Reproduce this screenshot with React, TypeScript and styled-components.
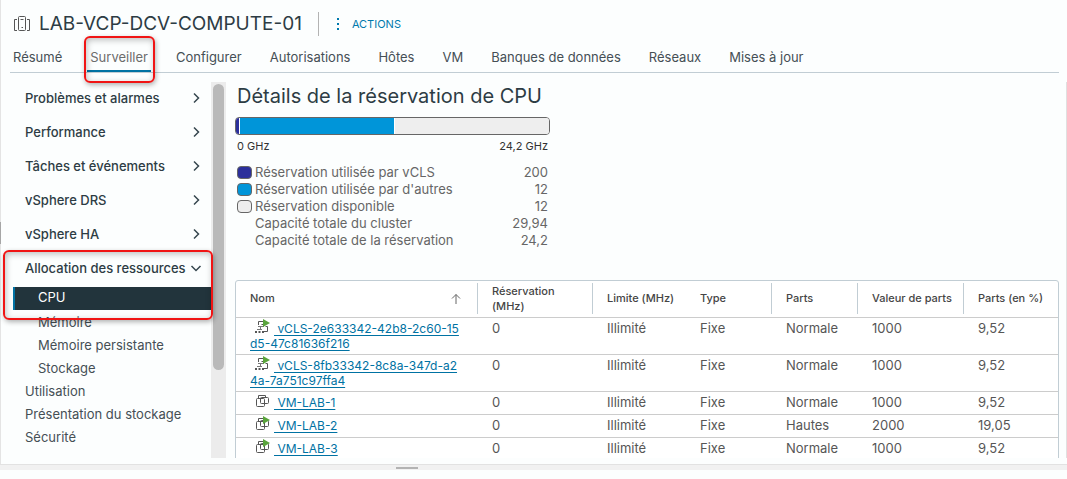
import React from "react";
import styled, { createGlobalStyle, css } from "styled-components";

const GlobalStyle = createGlobalStyle`
  *, *::before, *::after { box-sizing: border-box; }
  body {
    margin: 0;
    background: #fcfefe;
    color: #565656;
    font-family: Inter, "Liberation Sans", sans-serif;
    font-size: 13px;
    line-height: 16px;
  }
  button { font: inherit; color: inherit; background: none; border: 0; padding: 0; cursor: pointer; }
  a { color: inherit; text-decoration: none; }
  h1, h2, dl, dd, dt { margin: 0; padding: 0; font-weight: 400; }
`;

const Shell = styled.div`
  display: flex;
  flex-direction: column;
  height: 100vh;
  overflow: hidden;
`;

const Workspace = styled.main`
  position: relative;
  display: flex;
  flex: 1;
  flex-direction: column;
  min-height: 0;
  border-left: 1px solid #e4e4e4;
`;

const CollapseGrip = styled.span`
  position: absolute;
  left: -1px;
  top: 222px;
  width: 1px;
  height: 22px;
  background: #a6a6a6;
`;

const Header = styled.header`
  display: flex;
  align-items: center;
  height: 48px;
  padding-left: 12px;
`;

const Title = styled.h1`
  margin-left: 8px;
  padding-right: 16px;
  border-right: 1px solid #b3b3b3;
  color: #2d3c44;
  font-size: 19px;
  line-height: 24px;
  white-space: nowrap;
`;

const ActionsButton = styled.button`
  display: flex;
  align-items: center;
  gap: 12px;
  margin-left: 17px;
  color: #0079ad;
  font-size: 11px;
`;

const TabBar = styled.nav`
  display: flex;
  gap: 22px;
  margin: 0 8px 0 9px;
  border-bottom: 1px solid #c1cdd4;
`;

const Tab = styled.a<{ $active?: boolean }>`
  position: relative;
  height: 24px;
  padding: 0 3px;
  color: #454f55;
  line-height: 18px;
  white-space: nowrap;
  ${(p) => p.$active && css`
    color: #6c6c6c;
    box-shadow: inset 0 -2px 0 #0072a3;
  `}
`;

const Highlight = styled.span<{ $inset: string }>`
  position: absolute;
  inset: ${(p) => p.$inset};
  z-index: 2;
  border: 2px solid #f01414;
  border-radius: 6px;
  box-shadow: 1px 2px 5px rgba(0, 0, 0, 0.3), inset 1px 2px 6px rgba(0, 0, 0, 0.25);
  pointer-events: none;
`;

const Body = styled.div`
  display: flex;
  flex: 1;
  min-height: 0;
  padding: 9px 0 6px;
`;

const Sidebar = styled.nav`
  display: flex;
  flex-direction: column;
  flex: 0 0 210px;
`;

const GroupButton = styled.button`
  display: flex;
  align-items: center;
  justify-content: space-between;
  height: 34px;
  padding: 0 9px 2px 24px;
  color: #2d3c44;
  font-weight: 500;
  text-align: left;
  white-space: nowrap;
`;

const OpenGroup = styled.div`
  position: relative;
  display: flex;
  flex-direction: column;
`;

const NavLink = styled.a<{ $level: number; $active?: boolean }>`
  display: block;
  height: 23px;
  padding-left: ${(p) => (p.$level === 2 ? 37 : 24)}px;
  color: #454f55;
  line-height: 23px;
  ${(p) => p.$active && css`
    margin: 1px 0 1px 12px;
    padding-left: 23px;
    border-left: 2px solid #0072a3;
    background: #22343c;
    color: #fff;
    line-height: 21px;
  `}
`;

const ScrollTrack = styled.div`
  flex: 0 0 15px;
  padding: 2px;
  background: #ececec;
`;

const ScrollThumb = styled.div`
  height: 77%;
  border-radius: 6px;
  background: #b9b9b9;
`;

const Content = styled.section`
  flex: 1;
  min-width: 0;
  overflow: hidden;
  padding: 0 9px;
  border-right: 1px solid #e0e0e0;
`;

const SectionTitle = styled.h2`
  margin-left: 2px;
  color: #2d3c44;
  font-size: 20px;
  line-height: 28px;
  white-space: nowrap;
`;

const Summary = styled.div`
  width: 315px;
  margin: 7px 0 32px;
`;

const Meter = styled.div`
  display: flex;
  gap: 1px;
  height: 18px;
  overflow: hidden;
  border: 1px solid #666;
  border-radius: 4px;
  background: #fff;
`;

const Segment = styled.span<{ $color: string; $share: number }>`
  flex: ${(p) => p.$share} 0 0;
  background: ${(p) => p.$color};
`;

const Scale = styled.div`
  display: flex;
  justify-content: space-between;
  padding: 3px 2px 0;
  color: #333;
  font-size: 11px;
`;

const Legend = styled.dl`
  margin: 9px 2px 0;
`;

const LegendRow = styled.div`
  display: flex;
  align-items: center;
  height: 17px;
  color: #666;
  white-space: nowrap;
  dd { margin-left: auto; }
`;

const Swatch = styled.span<{ $color?: string }>`
  width: 15px;
  height: 13px;
  margin: 2px 3px 0 0;
  border: 1px solid ${(p) => (p.$color ? "#666" : "transparent")};
  border-radius: 4px;
  background: ${(p) => p.$color ?? "transparent"};
`;

const TableFrame = styled.div`
  margin-right: 1px;
`;

const Grid = styled.table`
  width: 100%;
  table-layout: fixed;
  border: 1px solid #c1cdd4;
  border-radius: 3px;
  border-spacing: 0;
  background: #fff;
`;

const HeadCell = styled.th<{ $divided?: boolean }>`
  height: 37px;
  padding: 0;
  border-bottom: 1px solid #ccc;
  color: #454545;
  font-size: 11px;
  font-weight: 500;
  line-height: 15px;
  text-align: left;
  > div {
    display: flex;
    align-items: center;
    justify-content: space-between;
    height: 31px;
    margin-bottom: 1px;
    padding: 0 16px 0 14px;
    border-right: 1px solid ${(p) => (p.$divided ? "#c1cdd4" : "transparent")};
    white-space: pre;
  }
`;

const Row = styled.tr`
  height: 23px;
`;

const Cell = styled.td`
  padding: 3px 0 3px 14px;
  border-bottom: 1px solid #ccc;
  line-height: 15px;
  vertical-align: top;
  white-space: nowrap;
`;

const NameCell = styled(Cell)`
  font-size: 12px;
`;

const VmLink = styled.a`
  color: #0072a3;
  text-decoration: underline;
  text-underline-offset: 2px;
  white-space: pre;
`;

const VmSvg = styled.svg`
  margin: -2px 3px 0 5px;
  vertical-align: top;
`;

const Splitter = styled.div`
  display: flex;
  justify-content: center;
  flex: 0 0 6px;
  margin-bottom: 9px;
  padding: 2px 254px 1px 0;
  border-top: 1px solid #e2e2e2;
  background: #f1f1f1;
  &::after {
    content: "";
    width: 22px;
    background: #b3b3b3;
  }
`;

const ClusterIcon = () => (
  <svg width="18" height="18" viewBox="0 0 18 18" fill="none" stroke="#565656" aria-hidden="true">
    <path d="M4 4.500H1.500v11H4M14 4.500h2.500v11H14" />
    <rect x="5.500" y="1.500" width="7" height="14" rx="1" />
    <path d="M7.500 4.500h3M8.500 12.500h1.500" />
  </svg>
);

const Dots = () => (
  <svg width="4" height="14" viewBox="0 0 4 14" fill="#0079ad" aria-hidden="true">
    <rect x="1" y="1" width="2" height="2" />
    <rect x="1" y="6" width="2" height="2" />
    <rect x="1" y="11" width="2" height="2" />
  </svg>
);

const Chevron = ({ open }: { open?: boolean }) => (
  <svg width="12" height="12" viewBox="0 0 12 12" fill="none" stroke="#36474f" strokeWidth="1.5" aria-hidden="true">
    <path d={open ? "M1.500 4 6 8.500 10.500 4" : "M4 1.500 8.500 6 4 10.500"} />
  </svg>
);

const SortArrow = () => (
  <svg width="10" height="12" viewBox="0 0 10 12" fill="none" stroke="#666" aria-label="Tri croissant">
    <path d="M5 11V1.500M1 5.500 5 1.500 9 5.500" />
  </svg>
);

const VmIcon = ({ agent, running }: { agent?: boolean; running?: boolean }) => (
  <VmSvg width="16" height="15" viewBox="0 0 16 15" fill="none" stroke="#565656" aria-hidden="true">
    {agent ? (
      <>
        <path d="M3.500 6V2.500H8M6.500 5.500H8M10.500 7.500h2v5h-5" />
        <path d="M3 7.500h6M5.500 8v2.500M2 10.500h5" stroke="#777" />
        <path d="M0 13h2M3.500 13h2M7 13h2" strokeWidth="2" />
      </>
    ) : (
      <>
        <path d="M3.500 5V2.500h7V4" />
        <rect x="1.500" y="5.500" width="8" height="8" rx="1" />
        <rect x="5.500" y="4.500" width="8" height="6" rx="1" />
      </>
    )}
    {running && <path d="M8 0 15 4 8 8z" fill="#5aa43c" stroke="none" />}
  </VmSvg>
);

const tabs = ["Résumé", "Surveiller", "Configurer", "Autorisations", "Hôtes", "VM", "Banques de données", "Réseaux", "Mises à jour"];
const groups = ["Problèmes et alarmes", "Performance", "Tâches et événements", "vSphere DRS", "vSphere HA"];

const legend = [
  { label: "Réservation utilisée par vCLS", value: "200", color: "#2b2f9b" },
  { label: "Réservation utilisée par d'autres", value: "12", color: "#0095d9" },
  { label: "Réservation disponible", value: "12", color: "#eee" },
  { label: "Capacité totale du cluster", value: "29,94" },
  { label: "Capacité totale de la réservation", value: "24,2" },
];

const columns = [
  { label: "Nom", width: 242, divided: true, sorted: true },
  { label: "Réservation\n(MHz)", width: 115, divided: true },
  { label: "Limite (MHz)", width: 93 },
  { label: "Type", width: 86, divided: true },
  { label: "Parts", width: 86, divided: true },
  { label: "Valeur de parts", width: 106, divided: true },
  { label: "Parts (en %)", width: 94 },
];

const vms = [
  { name: "vCLS-2e633342-42b8-2c60-15\nd5-47c81636f216", agent: true, running: true, parts: "Normale", value: "1000", percent: "9,52" },
  { name: "vCLS-8fb33342-8c8a-347d-a2\n4a-7a751c97ffa4", agent: true, running: true, parts: "Normale", value: "1000", percent: "9,52" },
  { name: "VM-LAB-1", parts: "Normale", value: "1000", percent: "9,52" },
  { name: "VM-LAB-2", running: true, parts: "Hautes", value: "2000", percent: "19,05" },
  { name: "VM-LAB-3", running: true, parts: "Normale", value: "1000", percent: "9,52" },
];

export default function App() {
  return (
    <Shell>
      <GlobalStyle />
      <Workspace>
        <CollapseGrip />
        <Header>
          <ClusterIcon />
          <Title>LAB-VCP-DCV-COMPUTE-01</Title>
          <ActionsButton>
            <Dots />
            ACTIONS
          </ActionsButton>
        </Header>
        <TabBar>
          {tabs.map((tab) => (
            <Tab key={tab} href="#" $active={tab === "Surveiller"}>
              {tab}
              {tab === "Surveiller" && <Highlight $inset="-12px -4px -11px -3px" />}
            </Tab>
          ))}
        </TabBar>
        <Body>
          <Sidebar>
            {groups.map((group) => (
              <GroupButton key={group}>
                {group}
                <Chevron />
              </GroupButton>
            ))}
            <OpenGroup>
              <GroupButton aria-expanded="true">
                Allocation des ressources
                <Chevron open />
              </GroupButton>
              <NavLink href="#" $level={2} $active>CPU</NavLink>
              <Highlight $inset="-2px -2px -9px 2px" />
            </OpenGroup>
            <NavLink href="#" $level={2}>Mémoire</NavLink>
            <NavLink href="#" $level={2}>Mémoire persistante</NavLink>
            <NavLink href="#" $level={2}>Stockage</NavLink>
            <NavLink href="#" $level={1}>Utilisation</NavLink>
            <NavLink href="#" $level={1}>Présentation du stockage</NavLink>
            <NavLink href="#" $level={1}>Sécurité</NavLink>
          </Sidebar>
          <ScrollTrack>
            <ScrollThumb />
          </ScrollTrack>
          <Content>
            <SectionTitle>Détails de la réservation de CPU</SectionTitle>
            <Summary>
              <Meter>
                <Segment $color="#2b2f9b" $share={3} />
                <Segment $color="#0095d9" $share={154} />
                <Segment $color="#eee" $share={154} />
              </Meter>
              <Scale>
                <span>0 GHz</span>
                <span>24,2 GHz</span>
              </Scale>
              <Legend>
                {legend.map((item) => (
                  <LegendRow key={item.label}>
                    <Swatch $color={item.color} />
                    <dt>{item.label}</dt>
                    <dd>{item.value}</dd>
                  </LegendRow>
                ))}
              </Legend>
            </Summary>
            <TableFrame>
              <Grid>
                <colgroup>
                  {columns.map((c) => (
                    <col key={c.label} width={c.width} />
                  ))}
                </colgroup>
                <thead>
                  <tr>
                    {columns.map((c) => (
                      <HeadCell key={c.label} $divided={c.divided}>
                        <div>
                          {c.label}
                          {c.sorted && <SortArrow />}
                        </div>
                      </HeadCell>
                    ))}
                  </tr>
                </thead>
                <tbody>
                  {vms.map((vm) => (
                    <Row key={vm.name}>
                      <NameCell>
                        <VmIcon agent={vm.agent} running={vm.running} />
                        <VmLink href="#">{" " + vm.name}</VmLink>
                      </NameCell>
                      <Cell>0</Cell>
                      <Cell>Illimité</Cell>
                      <Cell>Fixe</Cell>
                      <Cell>{vm.parts}</Cell>
                      <Cell>{vm.value}</Cell>
                      <Cell>{vm.percent}</Cell>
                    </Row>
                  ))}
                </tbody>
              </Grid>
            </TableFrame>
          </Content>
        </Body>
      </Workspace>
      <Splitter />
    </Shell>
  );
}
